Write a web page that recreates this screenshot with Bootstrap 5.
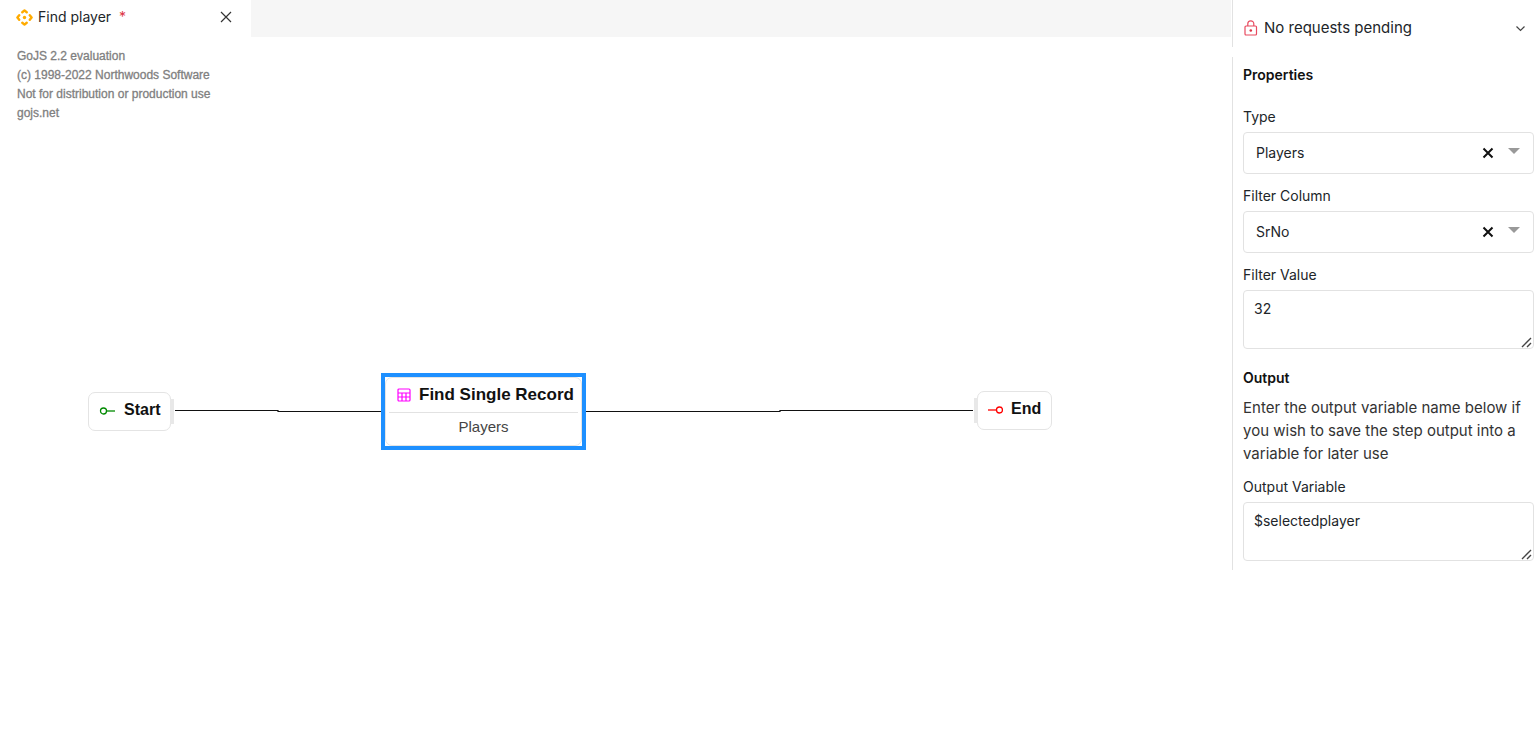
<!DOCTYPE html>
<html lang="en">
<head>
<meta charset="utf-8">
<meta name="viewport" content="width=device-width, initial-scale=1">
<title>Find player</title>
<link href="https://cdn.jsdelivr.net/npm/bootstrap@5.3.0/dist/css/bootstrap.min.css" rel="stylesheet">
<style>
  body { font-family: Inter, "Liberation Sans", sans-serif; font-size: 14px; line-height: 20px; color: #212529; background: #fff; }
  svg { display: block; flex: none; }
  .tab-strip { height: 37px; background: #f6f6f6; margin-right: 1px; }
  .file-tab { width: 251px; background: #fff; padding: 0 18px 3px 16px; gap: 5px; }
  .icon-btn { padding: 0; border: 0; background: none; line-height: 0; color: inherit; }
  .diagram { font-family: "Liberation Sans", Arial, sans-serif; }
  .watermark { padding: 10px 17px; font-size: 12px; line-height: 19px; color: #808080; -webkit-text-stroke: 0.3px #808080; }
  .node { position: absolute; font-size: 16px; font-weight: 700; color: #111; background: #fff; }
  .node-end { height: 39px; border: 1px solid #e4e4e4; border-radius: 7px; gap: 8px; padding: 0 10px 3px; }
  .node-start { left: 88px; top: 355px; }
  .node-stop { left: 977px; top: 354px; }
  .port { position: absolute; top: 6px; width: 4px; height: 25px; background: #e8e8e8; }
  .node-start .port { left: 100%; }
  .node-stop .port { right: 100%; }
  .node-find { left: 381px; top: 336px; width: 205px; height: 77px; border: 4px solid #1e90ff; }
  .node-inner { border: 1px solid #e4e4e4; border-radius: 7px; height: 69px; padding: 0 3px; }
  .node-title { height: 35px; gap: 8px; border-bottom: 1px solid #e2e2e2; padding: 0 0 0 8px; font-size: 17px; white-space: nowrap; }
  .node-text { font-size: 15px; font-weight: 400; color: #444; line-height: 28px; }
  .wires { position: absolute; left: 0; top: 360px; }
  .side { width: 308px; }
  .side-part { border-left: 1px solid #e2e2e2; }
  .requests { height: 47px; padding: 9px 13px 0 11px; gap: 6px; font-size: 15px; margin-bottom: 10px; }
  .props { padding: 8px 6px 9px 10px; }
  .props h2 { font-size: 14px; line-height: 20px; font-weight: 600; margin: 0; color: #111; }
  .props label { display: block; margin-bottom: 5px; }
  .props .first-field { margin-top: 22px; }
  .field { margin-bottom: 12px; }
  .pick { height: 42px; border: 1px solid #e2e2e2; border-radius: 4px; padding: 0 13px 0 12px; gap: 14px; }
  .pick select { appearance: none; border: 0; padding: 0; background: none; color: inherit; font: inherit; outline: 0; min-width: 0; }
  .props textarea { display: block; width: 100%; height: 59px; border: 1px solid #e2e2e2; border-radius: 4px; padding: 8px 10px; font: inherit; color: inherit; resize: none; outline: 0; }
  .grip { position: absolute; right: 2px; bottom: 1px; }
  .props .output-title { margin-top: 19px; }
  .hint { font-size: 15px; line-height: 23px; margin: 8px 0 12px; color: #333; }
</style>
</head>
<body>
<div class="d-flex align-items-stretch min-vh-100">
  <main class="flex-grow-1 d-flex flex-column">
    <div class="tab-strip d-flex">
      <div class="file-tab d-flex align-items-center">
        <svg width="17" height="17" viewBox="0 0 17 17" fill="none" stroke="#ffab00" stroke-width="2.400" stroke-linecap="round" stroke-linejoin="round"><path d="M6.300 3.200 8.500 1.400 10.700 3.200M6.300 13.800l2.200 1.800 2.200-1.800M3.200 6.300 1.400 8.500l1.800 2.200M13.800 6.300l1.800 2.200-1.800 2.200"/><circle cx="8.500" cy="8.500" r="1.700" fill="#ffab00" stroke="none"/></svg>
        <span>Find player <span class="text-danger ms-1">*</span></span>
        <button class="icon-btn ms-auto" aria-label="Close tab"><svg width="14" height="14" viewBox="0 0 14 14" stroke="#333" stroke-width="1.200"><path d="M2 2l10 10M12 2 2 12"/></svg></button>
      </div>
    </div>
    <div class="diagram position-relative flex-grow-1">
      <div class="watermark">GoJS 2.2 evaluation<br>(c) 1998-2022 Northwoods Software<br>Not for distribution or production use<br>gojs.net</div>
      <svg class="wires" width="980" height="30" fill="none" stroke="#111" stroke-width="1.200"><path d="M175 13.500H278V14.500H382M586 14.500H780V13.500H973"/></svg>
      <div class="node node-end node-start d-flex align-items-center">
        <svg width="17" height="10" viewBox="0 0 17 10" fill="none" stroke="#008a00" stroke-width="1.300"><circle cx="4.500" cy="6" r="3"/><path d="M7.500 6H16"/></svg>
        <span>Start</span><i class="port"></i>
      </div>
      <div class="node node-find">
        <div class="node-inner">
          <div class="node-title d-flex align-items-center">
            <svg width="14" height="14" viewBox="0 0 14 14" fill="none" stroke="#f0f" stroke-width="1.200"><rect x="1" y="1" width="12" height="12" rx="1"/><path d="M1 5H13M1 9H13M5 5V13M9 5V13"/></svg>
            <span>Find Single Record</span>
          </div>
          <div class="node-text text-center">Players</div>
        </div>
      </div>
      <div class="node node-end node-stop d-flex align-items-center">
        <i class="port"></i><svg width="15" height="10" viewBox="0 0 15 10" fill="none" stroke="#f00" stroke-width="1.300"><circle cx="11.500" cy="6" r="3"/><path d="M0 6H8.500"/></svg>
        <span>End</span>
      </div>
    </div>
  </main>
  <aside class="side flex-shrink-0">
    <div class="side-part requests d-flex align-items-center">
      <svg width="14" height="16" viewBox="0 0 14 16" fill="none" stroke="#e84a5f" stroke-width="1.200"><rect x="1" y="6" width="11.500" height="9" rx="1"/><path d="M3.800 6V3.800a3 3 0 0 1 6 0V6"/><circle cx="6.800" cy="10.500" r="1.300" fill="#dc3545" stroke="none"/></svg>
      <span>No requests pending</span>
      <button class="icon-btn ms-auto" aria-label="Expand requests"><svg width="13" height="10" viewBox="0 0 13 10" fill="none" stroke="#444" stroke-width="1.200"><path d="M2.500 3.500l4 4 4-4"/></svg></button>
    </div>
    <form class="side-part props">
      <h2>Properties</h2>
      <div class="field first-field">
        <label for="type">Type</label>
        <div class="pick d-flex align-items-center">
          <select id="type" class="flex-grow-1"><option>Players</option></select>
          <button type="button" class="icon-btn" aria-label="Clear type"><svg width="12" height="12" viewBox="0 0 12 12" stroke="#111" stroke-width="2"><path d="M1.500 1.500l9 9M10.500 1.500l-9 9"/></svg></button>
          <svg class="mb-1" width="12" height="6" viewBox="0 0 12 6" fill="#999"><path d="M0 0h12L6 6z"/></svg>
        </div>
      </div>
      <div class="field">
        <label for="column">Filter Column</label>
        <div class="pick d-flex align-items-center">
          <select id="column" class="flex-grow-1"><option>SrNo</option></select>
          <button type="button" class="icon-btn" aria-label="Clear filter column"><svg width="12" height="12" viewBox="0 0 12 12" stroke="#111" stroke-width="2"><path d="M1.500 1.500l9 9M10.500 1.500l-9 9"/></svg></button>
          <svg class="mb-1" width="12" height="6" viewBox="0 0 12 6" fill="#999"><path d="M0 0h12L6 6z"/></svg>
        </div>
      </div>
      <div>
        <label for="value">Filter Value</label>
        <div class="position-relative">
          <textarea id="value">32</textarea>
          <svg class="grip" width="11" height="11" viewBox="0 0 11 11" stroke="#444" stroke-width="1.400"><path d="M1 10l9-9M6 10l4-4"/></svg>
        </div>
      </div>
      <h2 class="output-title">Output</h2>
      <p class="hint">Enter the output variable name below if you wish to save the step output into a variable for later use</p>
      <label for="output">Output Variable</label>
      <div class="position-relative">
        <textarea id="output">$selectedplayer</textarea>
        <svg class="grip" width="11" height="11" viewBox="0 0 11 11" stroke="#444" stroke-width="1.400"><path d="M1 10l9-9M6 10l4-4"/></svg>
      </div>
    </form>
  </aside>
</div>
<script src="https://cdn.jsdelivr.net/npm/bootstrap@5.3.0/dist/js/bootstrap.bundle.min.js"></script>
</body>
</html>
